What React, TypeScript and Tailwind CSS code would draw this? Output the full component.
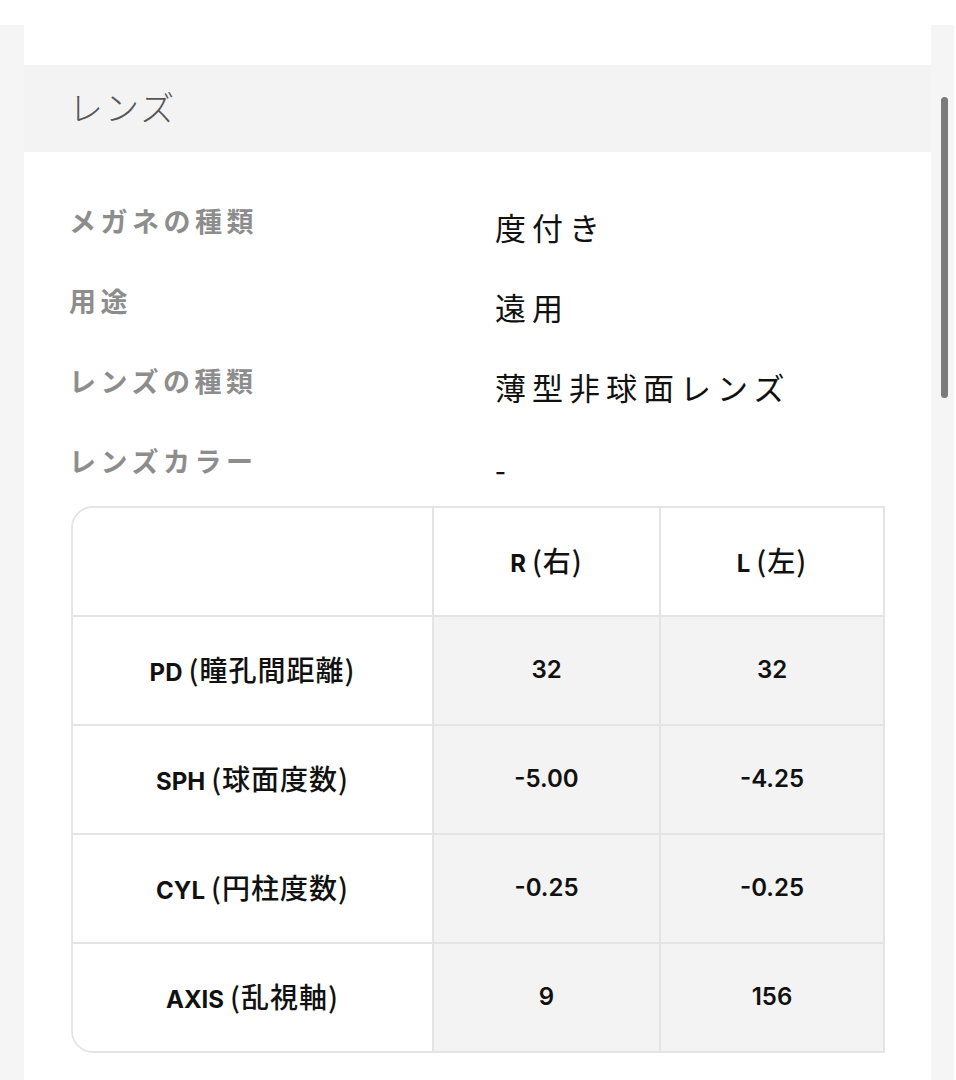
import React from "react";

const labels: [string, string][] = [
  ["メガネの種類", "度付き"],
  ["用途", "遠用"],
  ["レンズの種類", "薄型非球面レンズ"],
  ["レンズカラー", "-"],
];

const rows: [string, string, string, string][] = [
  ["PD", "(瞳孔間距離)", "32", "32"],
  ["SPH", "(球面度数)", "-5.00", "-4.25"],
  ["CYL", "(円柱度数)", "-0.25", "-0.25"],
  ["AXIS", "(乱視軸)", "9", "156"],
];

function Cell({ latin, cjk }: { latin: string; cjk: string }) {
  return (
    <span className="flex items-baseline leading-none text-[#111] -mt-[2px]">
      <span className="text-[24px] font-bold" style={{ fontFamily: 'Inter, sans-serif' }}>{latin}</span>
      <span className="text-[28px] font-medium ml-[6px] tracking-[1px]" style={{ fontFamily: '"Noto Sans CJK JP", sans-serif' }}>{cjk}</span>
    </span>
  );
}

export default function App() {
  const jp = { fontFamily: '"Noto Sans CJK JP", "Noto Sans", sans-serif' };
  const num = { fontFamily: 'Inter, sans-serif' };
  return (
    <div className="w-[956px] h-[1080px] bg-white overflow-hidden flex flex-col" style={jp}>
      <div className="h-[25px] bg-white shrink-0" />
      <div className="flex flex-1">
        <div className="w-[24px] bg-[#f5f5f5]" />
        <div className="w-[907px] bg-white flex flex-col">
          <div className="h-[40px]" />
          <div className="h-[87px] bg-[#f3f3f3] flex items-center pl-[45px] pb-[4px]">
            <span className="text-[34px] font-light text-[#555555] tracking-[2px] leading-none">レンズ</span>
          </div>
          <div className="pl-[47px] pr-[46px] pt-[28px] flex flex-col">
            {labels.map(([l, v], i) => (
              <div key={i} className="h-[80px] flex items-center">
                <div className="w-[424px] -ml-[2px] mr-[2px] text-[27px] font-bold text-[#8d8d8d] tracking-[4.5px] leading-none">{l}</div>
                <div className={`text-[31px] text-[#111111] tracking-[6px] leading-none ${i === 3 ? "pt-[16px]" : "pt-[12px]"}`}>{v}</div>
              </div>
            ))}
            <div className="mt-[6px] w-[814px] border-2 border-[#e4e4e4] rounded-tl-[22px] rounded-bl-[22px] overflow-hidden">
              <div className="grid grid-cols-[361px_227px_222px] h-[107px]">
                <div className="bg-white border-r-2 border-[#e4e4e4]" />
                <div className="bg-white border-r-2 border-[#e4e4e4] flex items-center justify-center"><Cell latin="R" cjk="(右)" /></div>
                <div className="bg-white flex items-center justify-center"><Cell latin="L" cjk="(左)" /></div>
              </div>
              {rows.map(([a, j, b, c], i) => (
                <div key={i} className="grid grid-cols-[361px_227px_222px] h-[109px] border-t-2 border-[#e4e4e4]">
                  <div className="bg-white border-r-2 border-[#e4e4e4] flex items-center justify-center"><Cell latin={a} cjk={j} /></div>
                  <div className="bg-[#f3f3f3] border-r-2 border-[#e4e4e4] flex items-center justify-center text-[24px] font-semibold text-[#111] leading-none pb-[2px]" style={num}>{b}</div>
                  <div className="bg-[#f3f3f3] flex items-center justify-center text-[24px] font-semibold text-[#111] leading-none pb-[2px]" style={num}>{c}</div>
                </div>
              ))}
            </div>
          </div>
        </div>
        <div className="w-[23px] bg-[#f5f5f5] pt-[72px] pl-[10px]">
          <div className="w-[7px] h-[301px] rounded-full bg-[#7b7b7b]" />
        </div>
        <div className="w-[2px] bg-white" />
      </div>
    </div>
  );
}
